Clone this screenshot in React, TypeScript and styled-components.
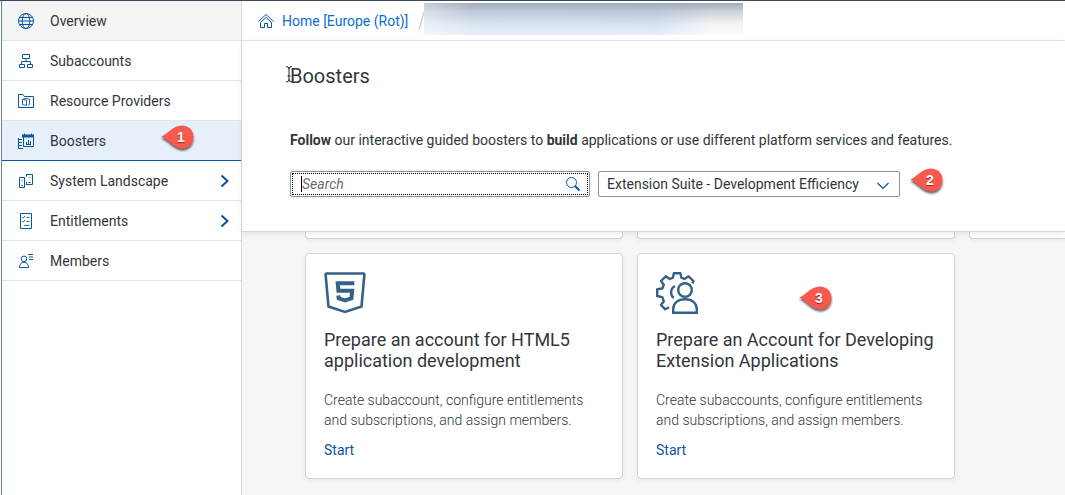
import React from "react";
import styled, { createGlobalStyle } from "styled-components";

const GlobalStyle = createGlobalStyle`
  * { box-sizing: border-box; }
  html, body, #root { height: 100%; }
  body {
    margin: 0;
    background: #f6f6f6;
    color: #32363a;
    font-family: Roboto, "Liberation Sans", sans-serif;
    font-size: 14px;
    line-height: 20px;
    overflow: hidden;
  }
`;

const Shell = styled.div`
  display: flex;
  min-height: 100%;
  border-top: 1px solid #354a5f;
  background: #fff;
`;

const Sidebar = styled.nav`
  flex: 0 0 241px;
  margin-left: 1px;
  border-left: 1px solid #6d8389;
  border-right: 1px solid #d9d9d9;
  background: #fff;
`;

const NavList = styled.ul`
  list-style: none;
  margin: 0;
  padding: 0;
`;

const NavItem = styled.li<{ $state?: "hover" | "selected" }>`
  position: relative;
  border-bottom: 1px solid ${(p) => (p.$state === "selected" ? "#0854a0" : "#e4e4e4")};
  background: ${(p) =>
    p.$state === "selected" ? "#e5f0fa" : p.$state === "hover" ? "#f4f4f4" : "#fff"};
`;

const NavLink = styled.a`
  display: flex;
  align-items: center;
  gap: 16px;
  height: 39px;
  padding: 0 11px 0 16px;
  color: #32363a;
  text-decoration: none;
`;

const NavLabel = styled.span`
  flex: 1;
`;

const Icon = styled.svg`
  display: block;
  flex: none;
  fill: none;
  stroke: #0854a0;
`;

const Main = styled.main`
  flex: 1;
  min-width: 0;
  display: flex;
  flex-direction: column;
  background: #f6f6f6;
`;

const Breadcrumb = styled.nav`
  display: flex;
  align-items: center;
  height: 40px;
  padding-left: 16px;
  border-bottom: 1px solid #e4e4e4;
  background: #fff;
`;

const CrumbLink = styled.a`
  display: flex;
  align-items: center;
  gap: 8px;
  color: #0a6ed1;
  text-decoration: none;
  white-space: nowrap;
`;

const Separator = styled.svg`
  display: block;
  flex: none;
  margin-left: 10px;
`;

const Redacted = styled.div`
  flex: 0 1 319px;
  align-self: flex-start;
  height: 32px;
  margin-top: 2px;
  background:
    linear-gradient(90deg, rgba(255, 255, 255, 0.4) 0%, rgba(255, 255, 255, 0) 15%),
    linear-gradient(180deg, rgba(163, 170, 186, 1) 0%, rgba(163, 173, 189, 0.5) 28%, rgba(200, 210, 220, 0.15) 65%, rgba(255, 255, 255, 0.4) 100%),
    linear-gradient(90deg, #dde8f6 0%, #d6e4f5 73%, #fafaf8 90%);
`;

const PageHeader = styled.header`
  position: relative;
  padding: 23px 48px 34px;
  border-bottom: 1px solid #d5d5d5;
  background: #fff;
  box-shadow: 0 2px 6px rgba(0, 0, 0, 0.08);
`;

const Title = styled.h1`
  margin: 0;
  font-size: 20px;
  line-height: 24px;
  font-weight: 400;
`;

const MouseCursor = styled.svg`
  position: absolute;
  left: 43px;
  top: 25px;
`;

const Intro = styled.p`
  margin: 42px 0 21px;
  white-space: nowrap;
`;

const Filters = styled.div`
  display: flex;
  align-items: center;
  gap: 8px;
`;

const SearchBox = styled.label`
  display: flex;
  align-items: center;
  flex: 0 1 300px;
  height: 26px;
  padding: 0 8px 0 9px;
  border: 1px solid #89919a;
  border-radius: 2px;
  background: #fff;
  outline: 1px dotted #000;
  outline-offset: -3px;
`;

const Caret = styled.span`
  width: 1px;
  height: 16px;
  margin-left: 1px;
  background: #000;
`;

const SearchInput = styled.input`
  flex: 1;
  min-width: 0;
  padding: 0;
  border: 0;
  outline: 0;
  background: transparent;
  color: #32363a;
  font: inherit;
  &::placeholder {
    color: #6a6d70;
    font-style: italic;
    opacity: 1;
  }
`;

const SelectBox = styled.div`
  position: relative;
  flex: 0 1 302px;
`;

const Select = styled.select`
  display: block;
  width: 100%;
  height: 26px;
  padding: 0 32px 0 8px;
  border: 1px solid #89919a;
  border-radius: 2px;
  background: #fff;
  color: #32363a;
  font: inherit;
  appearance: none;
`;

const SelectArrow = styled(Icon)`
  position: absolute;
  right: 11px;
  top: 11px;
  pointer-events: none;
`;

const Cards = styled.section`
  display: grid;
  grid-template-columns: repeat(3, 318px);
  gap: 14px;
  padding-left: 63px;
  overflow: hidden;
  flex: 1;
  align-content: start;
`;

const cardEdge = "#d5d5d5";

const CardEnd = styled.div`
  height: 7px;
  border: 1px solid ${cardEdge};
  border-top: 0;
  border-radius: 0 0 4px 4px;
  background: #fff;
  box-shadow: 0 2px 5px rgba(0, 0, 0, 0.05);
`;

const Card = styled.article`
  position: relative;
  padding: 18px;
  border: 1px solid ${cardEdge};
  border-radius: 4px;
  background: #fff;
  box-shadow: 0 2px 5px rgba(0, 0, 0, 0.05);
`;

const CardIcon = styled.svg`
  display: block;
  fill: none;
  stroke: #346187;
`;

const CardTitle = styled.h2`
  margin: 15px 0 19px;
  font-size: 18px;
  line-height: 21px;
  font-weight: 400;
`;

const CardText = styled.p`
  margin: 0 0 10px;
  font-weight: 300;
`;

const StartLink = styled.a`
  color: #0854a0;
  text-decoration: none;
`;

const PinBody = styled.span`
  position: relative;
  display: block;
  flex: none;
  width: 36px;
  height: 30px;
`;

const PinShape = styled.svg`
  position: absolute;
  inset: 0;
`;

const PinNumber = styled.span`
  position: absolute;
  left: 12px;
  top: 3px;
  width: 18px;
  text-align: center;
  color: #fff;
  font-family: "Liberation Sans", sans-serif;
  font-size: 14px;
  line-height: 20px;
  font-weight: 700;
  text-shadow: 0 1px 1px #8c2a24;
`;

const NavPin = styled.div`
  position: absolute;
  left: 158px;
  top: 3px;
`;

const CardPin = styled.div`
  position: absolute;
  left: 160px;
  top: 31px;
`;

const FilterPin = styled.div`
  margin: -6px 0 -2px 1px;
`;

function Pin({ n }: { n: number }) {
  return (
    <PinBody>
      <PinShape width="36" height="30" viewBox="0 0 36 30" aria-hidden="true">
        <defs>
          <filter id={`pin-shadow-${n}`} x="-20%" y="-20%" width="150%" height="160%">
            <feDropShadow dx="0" dy="2" stdDeviation="1" floodColor="#222" floodOpacity="0.75" />
          </filter>
        </defs>
        <path
          d="M1.500 12.500C8 10 12 2 22 1.500C29 1.500 33.500 6.500 33.500 13C33.500 19.500 29 24.500 22.500 24.500C14 24 9 16 1.500 12.500Z"
          fill="#f9584f"
          filter={`url(#pin-shadow-${n})`}
        />
      </PinShape>
      <PinNumber>{n}</PinNumber>
    </PinBody>
  );
}

const GlobeIcon = () => (
  <Icon width="16" height="16" viewBox="0 0 16 16">
    <circle cx="8" cy="8" r="7.5" />
    <ellipse cx="8" cy="8" rx="3.8" ry="7.500" />
    <path d="M1.500 4.500H14.500M.5 8H15.500M1.500 11.500H14.500" />
  </Icon>
);

const OrgIcon = () => (
  <Icon width="16" height="16" viewBox="0 0 16 16">
    <path d="M4.500 1.500H11.500V5.500H4.500ZM8 5.500V8.500M3.500 11V8.500H12.500V11M1.500 11.500H6.500V14.500H1.500ZM9.500 11.500H14.500V14.500H9.500Z" />
  </Icon>
);

const FolderIcon = () => (
  <Icon width="16" height="16" viewBox="0 0 16 16">
    <path d="M.5 14.500V1.500H5L6.500 3.500H15.500V14.500Z" />
    <path d="M4.500 6.500L8.500 7V12.500L4.500 11.500ZM4.500 6.500L7 5.500L11.500 6V11L10.500 12.500" strokeWidth=".9" />
  </Icon>
);

const BoosterIcon = () => (
  <Icon width="16" height="16" viewBox="0 0 16 16">
    <path d="M5.500 4V13.500H15.500V3" />
    <path d="M4 1.500H16V4.500H4Z" fill="#0854a0" stroke="none" />
    <path d="M6.500.5V3M13.500.5V3M8.500 11.500V9M10.500 11.500V7M12.500 11.500V8M8 11.500H13" />
    <path d="M.5 5V15.500H5M.5 6.500H4M1 9.500H4M1 12.500H4" />
  </Icon>
);

const SystemIcon = () => (
  <Icon width="16" height="16" viewBox="0 0 16 16">
    <path d="M1.500 4.500H6.500V14.500H1.500ZM8 1.500H14.500V11.500H8M8.500 1V3.500M8.500 9V11.500M3.500 7.500H4.500M3.500 12.500H5M11.500 4.500H12.500M10.500 9.500H12.500" />
  </Icon>
);

const ChecklistIcon = () => (
  <Icon width="16" height="16" viewBox="0 0 16 16">
    <path d="M2.500.5H13.500V15.500H2.500Z" />
    <path d="M4.200 4.200L5.200 5.200L7 3M4.200 8.200L5.200 9.200L7 7M8.500 4.500H11.500M8.500 8.500H11.500M6 12.800L8 12L9 13L10 12L11.500 13" strokeWidth=".9" />
  </Icon>
);

const MemberIcon = () => (
  <Icon width="16" height="16" viewBox="0 0 16 16">
    <circle cx="6" cy="5.800" r="2.800" />
    <path d="M1.500 14.500C1.500 11 3.300 9.300 6 9.300S10.500 11 10.500 14.500ZM10 1.500H15M11 4H15M11 6.500H15" />
  </Icon>
);

const ChevronRight = () => (
  <Icon width="10" height="14" viewBox="0 0 10 14" strokeWidth="2">
    <path d="M1.500 1.500L7.500 7L1.500 12.500" />
  </Icon>
);

type Entry = {
  label: string;
  icon: React.ReactNode;
  state?: "hover" | "selected";
  expandable?: boolean;
  pin?: number;
};

const entries: Entry[] = [
  { label: "Overview", icon: <GlobeIcon />, state: "hover" },
  { label: "Subaccounts", icon: <OrgIcon /> },
  { label: "Resource Providers", icon: <FolderIcon /> },
  { label: "Boosters", icon: <BoosterIcon />, state: "selected", pin: 1 },
  { label: "System Landscape", icon: <SystemIcon />, expandable: true },
  { label: "Entitlements", icon: <ChecklistIcon />, expandable: true },
  { label: "Members", icon: <MemberIcon /> },
];

const Html5Icon = () => (
  <CardIcon width="42" height="42" viewBox="0 0 42 42" strokeWidth="2.600">
    <path d="M2.500 1.500H39.500Q40.500 1.500 40.400 2.500L37.500 34.500L21 40L4.500 34.500L1.600 2.500Q1.500 1.500 2.500 1.500Z" />
    <path d="M30.300 11.200H13.700L14.400 18.800H28.200L27.400 26.300L21 28.400L14.600 26.300L14.300 23.500" strokeWidth="4" />
  </CardIcon>
);

const GearUserIcon = () => (
  <CardIcon width="42" height="42" viewBox="0 0 42 42" strokeWidth="2.400">
    <path
      strokeLinejoin="round"
      d="M36.500 11.500L37.500 9L32.500 4.300L28.500 7L25.300 5.600L24.400 1.200H17.800L17 5.600L13.700 7L9.800 4.300L5 9L7.800 12.700L6.300 16.500L1.200 17.300V24L6.300 25.200L7.800 29.300L5 33L9.300 37.300L13 35.300"
    />
    <path d="M19 14C14 16.500 14 23.500 17.800 25.800" />
    <circle cx="29" cy="18" r="6.800" />
    <path d="M17.200 40.800V37C17.200 31 22 27.200 29 27.200S40.800 31 40.800 37V40.800Z" />
  </CardIcon>
);

export default function App() {
  return (
    <>
      <GlobalStyle />
      <Shell>
        <Sidebar aria-label="Main navigation">
          <NavList>
            {entries.map((e) => (
              <NavItem key={e.label} $state={e.state}>
                <NavLink href="#">
                  {e.icon}
                  <NavLabel>{e.label}</NavLabel>
                  {e.expandable && <ChevronRight />}
                </NavLink>
                {e.pin && (
                  <NavPin>
                    <Pin n={e.pin} />
                  </NavPin>
                )}
              </NavItem>
            ))}
          </NavList>
        </Sidebar>
        <Main>
          <Breadcrumb aria-label="Breadcrumb">
            <CrumbLink href="#">
              <Icon width="16" height="16" viewBox="0 0 16 16">
                <path d="M.5 8.500L8 1.500L15.500 8.500M2.500 9.500V14.500H6.500V10.500H9.500V14.500H13.500V9.500L8 4.500Z" />
              </Icon>
              Home [Europe (Rot)]
            </CrumbLink>
            <Separator width="6" height="20" viewBox="0 0 6 20" aria-hidden="true">
              <path d="M1 19L6 1" stroke="#d0d0d0" strokeWidth="1.500" />
            </Separator>
            <Redacted />
          </Breadcrumb>
          <PageHeader>
            <MouseCursor width="8" height="17" viewBox="0 0 8 17" fill="none" stroke="#222" aria-hidden="true">
              <path d="M1 .5Q4 .5 4 3Q4 .5 7 .5M4 2.500V14M1 16Q4 16 4 13.500Q4 16 7 16M2.500 10H5.500" />
            </MouseCursor>
            <Title>Boosters</Title>
            <Intro>
              <b>Follow</b> our interactive guided boosters to <b>build</b> applications or use
              different platform services and features.
            </Intro>
            <Filters>
              <SearchBox>
                <Caret />
                <SearchInput type="text" placeholder="Search" aria-label="Search" />
                <Icon width="16" height="16" viewBox="0 0 16 16">
                  <circle cx="6.500" cy="6.500" r="5" />
                  <path d="M10 10L14.500 14.500" strokeWidth="2" />
                </Icon>
              </SearchBox>
              <SelectBox>
                <Select aria-label="Booster category">
                  <option>Extension Suite - Development Efficiency</option>
                </Select>
                <SelectArrow width="12" height="8" viewBox="0 0 12 8">
                  <path d="M.5 1L6 6.500L11.500 1" strokeWidth="1.200" />
                </SelectArrow>
              </SelectBox>
              <FilterPin>
                <Pin n={2} />
              </FilterPin>
            </Filters>
          </PageHeader>
          <Cards>
            <CardEnd />
            <CardEnd />
            <CardEnd />
            <Card>
              <Html5Icon />
              <CardTitle>Prepare an account for HTML5 application development</CardTitle>
              <CardText>
                Create subaccount, configure entitlements and subscriptions, and assign members.
              </CardText>
              <StartLink href="#">Start</StartLink>
            </Card>
            <Card>
              <GearUserIcon />
              <CardTitle>Prepare an Account for Developing Extension Applications</CardTitle>
              <CardText>
                Create subaccounts, configure entitlements and subscriptions, and assign members.
              </CardText>
              <StartLink href="#">Start</StartLink>
              <CardPin>
                <Pin n={3} />
              </CardPin>
            </Card>
          </Cards>
        </Main>
      </Shell>
    </>
  );
}
